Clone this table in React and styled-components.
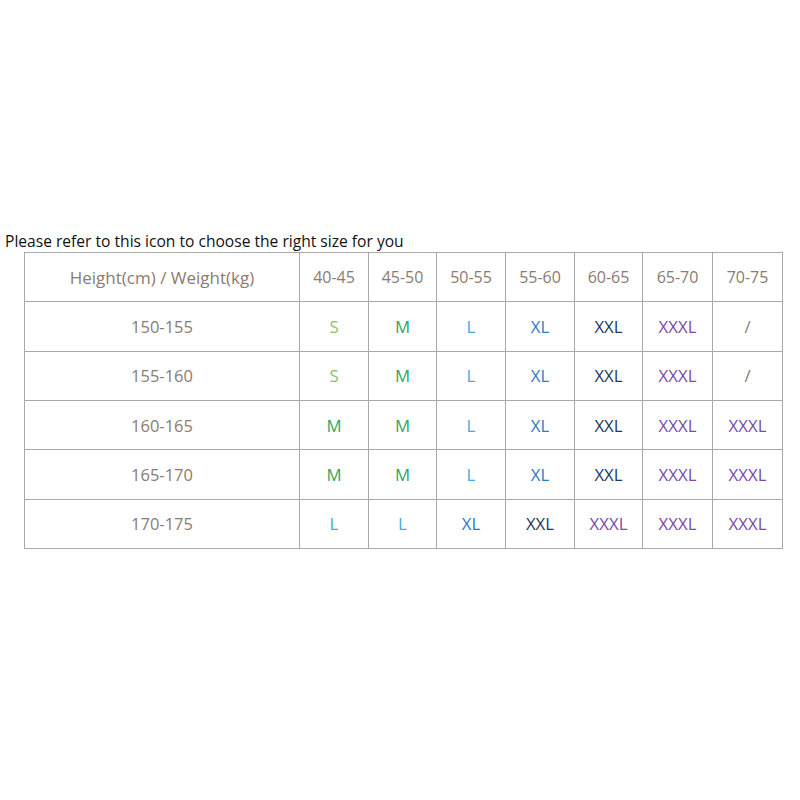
import styled, { createGlobalStyle } from "styled-components";

const GlobalStyle = createGlobalStyle`
body {
    margin: 0;
    background: #fff;
    font-family: "Open Sans", "Liberation Sans", sans-serif;
}
`;

const weights = ["40-45", "45-50", "50-55", "55-60", "60-65", "65-70", "70-75"];
const widths = [275, 69, 68, 69, 69, 68, 70, 70];

const rows = [
    { h: "150-155", sizes: ["S", "M", "L", "XL", "XXL", "XXXL", "/"] },
    { h: "155-160", sizes: ["S", "M", "L", "XL", "XXL", "XXXL", "/"] },
    { h: "160-165", sizes: ["M", "M", "L", "XL", "XXL", "XXXL", "XXXL"] },
    { h: "165-170", sizes: ["M", "M", "L", "XL", "XXL", "XXXL", "XXXL"] },
    { h: "170-175", sizes: ["L", "L", "XL", "XXL", "XXXL", "XXXL", "XXXL"] },
];

const sizeColors = {
    S: "#8cc26a",
    M: "#2fa564",
    L: "#45a9e2",
    XL: "#2e7bc4",
    XXL: "#223a63",
    XXXL: "#7b4aa8",
    "/": "#8b7b70",
};

function App() {
    return (
        <Page>
            <GlobalStyle />
            <Title>Please refer to this icon to choose the right size for you</Title>
            <Table>
                <colgroup>
                    {widths.map((w, i) => (
                        <col key={i} style={{ width: w }} />
                    ))}
                </colgroup>
                <tbody>
                    <tr>
                        <Cell $size={17}>Height(cm) / Weight(kg)</Cell>
                        {weights.map((w) => (
                            <Cell key={w}>{w}</Cell>
                        ))}
                    </tr>
                    {rows.map((r) => (
                        <tr key={r.h}>
                            <Cell $size={16.5}>{r.h}</Cell>
                            {r.sizes.map((s, i) => (
                                <Cell key={i} $size={16.8} $color={sizeColors[s]}>{s}</Cell>
                            ))}
                        </tr>
                    ))}
                </tbody>
            </Table>
        </Page>
    );
}

export default App;

const Page = styled.div`
padding-top: 231px;
`;

const Title = styled.div`
margin-left: 5px;
font-size: 15.6px;
line-height: 21px;
color: #111;
`;

const Table = styled.table`
margin-left: 24px;
width: 758px;
table-layout: fixed;
border-collapse: collapse;
border: 1px solid #6a6a6a;
`;

const Cell = styled.td`
height: 48.35px;
padding: 0;
text-align: center;
vertical-align: middle;
font-size: ${(p) => p.$size || 16}px;
color: ${(p) => p.$color || "#8b7b70"};
border: 1px solid #a8a8a8;
`;
